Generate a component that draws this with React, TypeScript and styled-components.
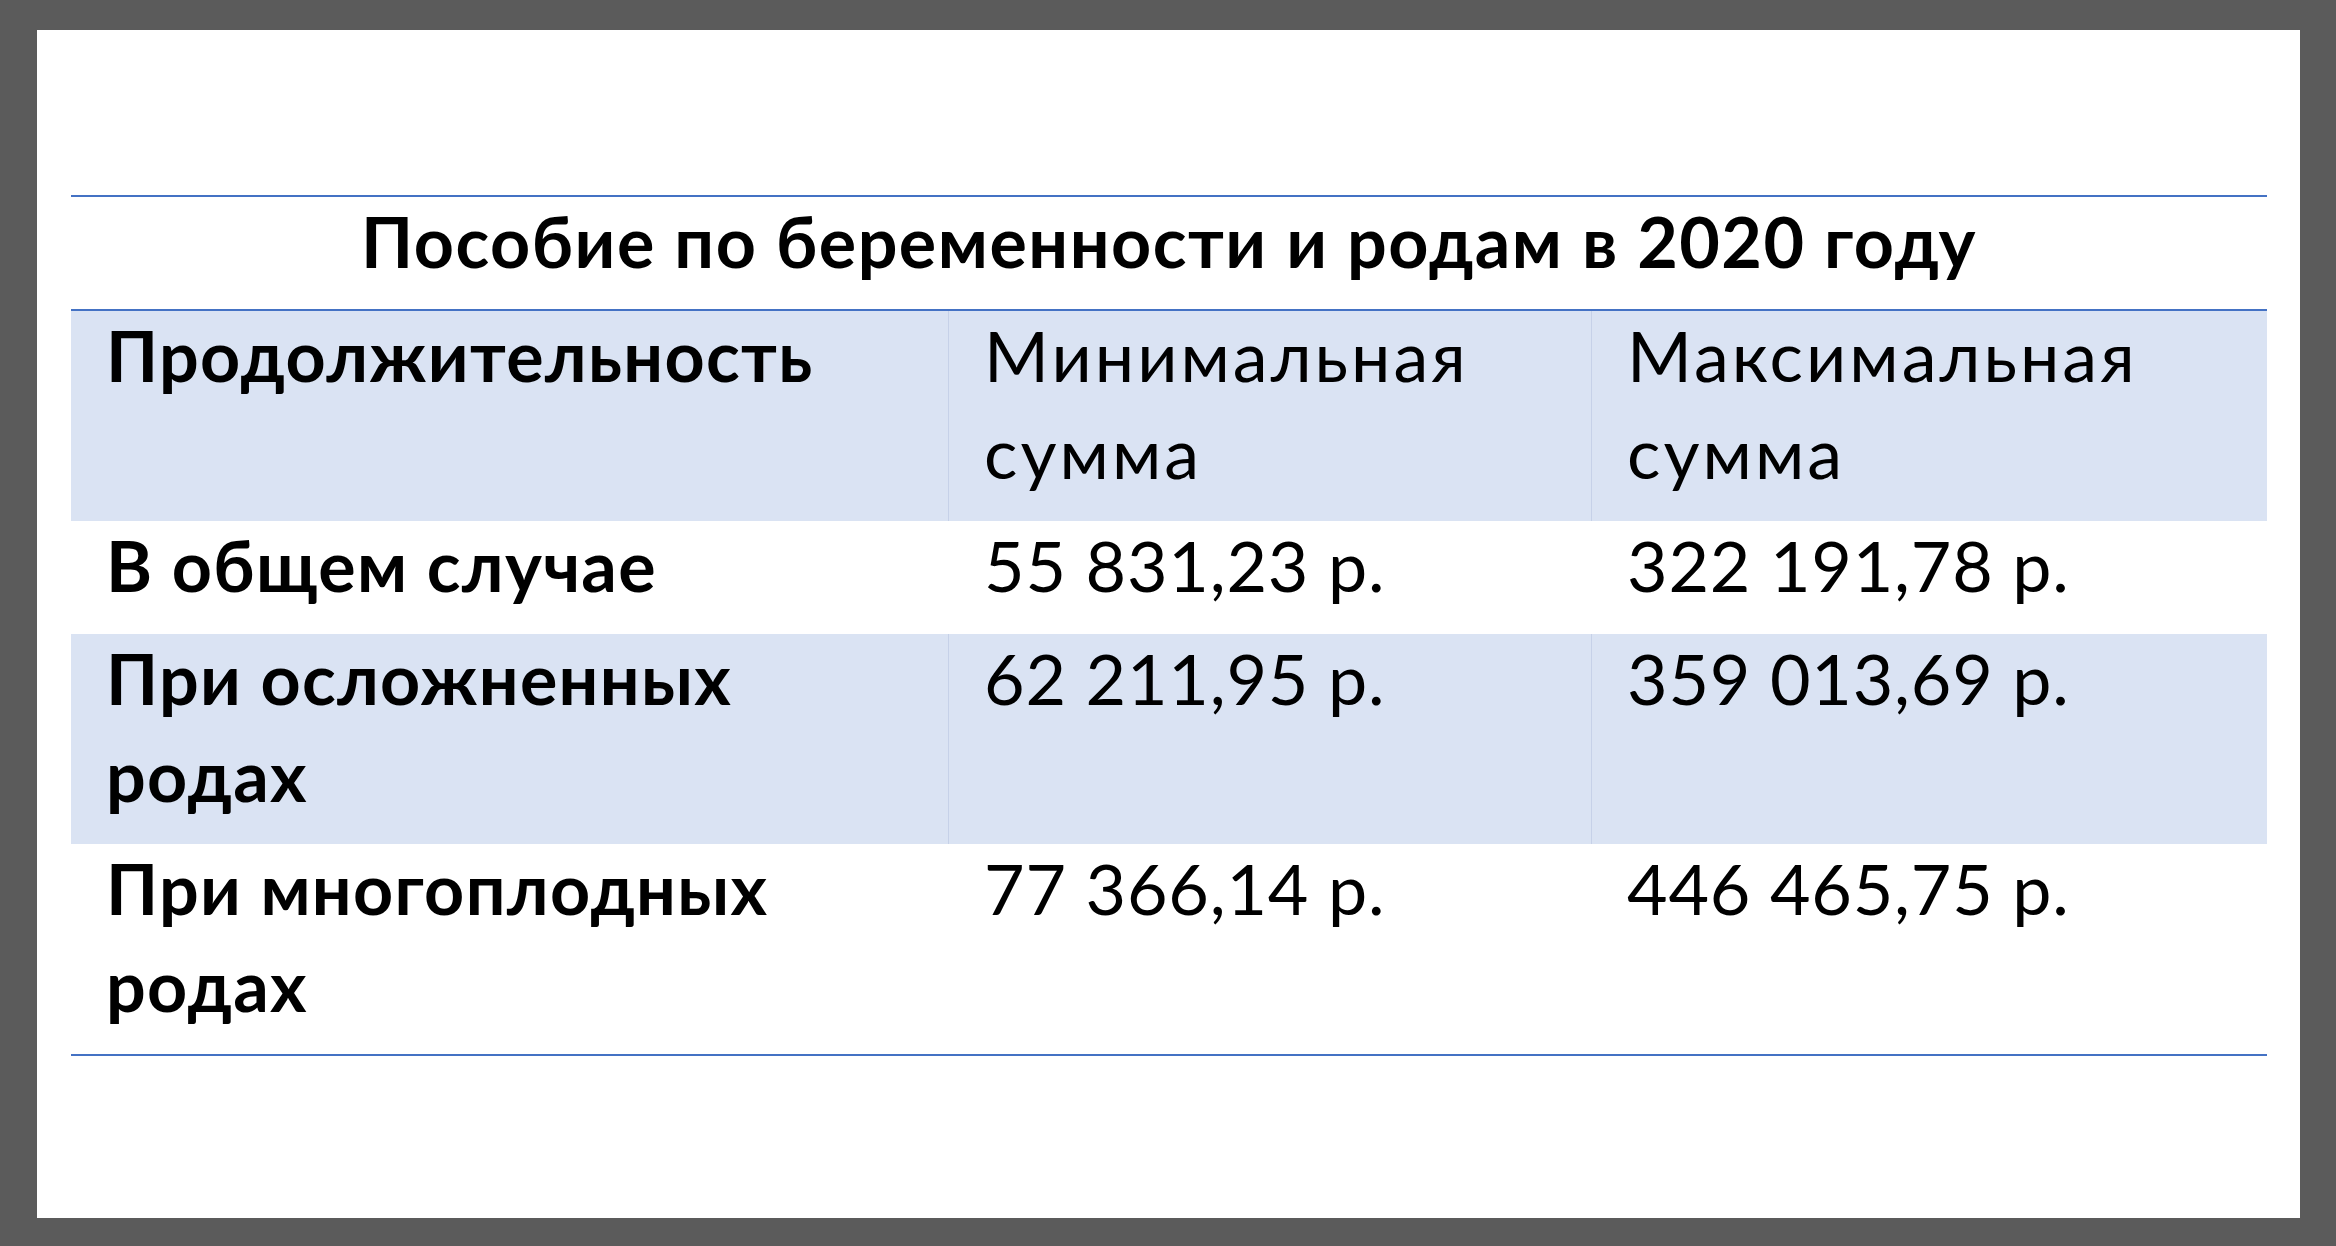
import styled, { createGlobalStyle } from 'styled-components'

const Global = createGlobalStyle`
  html, body {
    margin: 0;
    padding: 0;
    background: #5b5b5b;
  }
`

const Page = styled.div`
  width: 2336px;
  height: 1246px;
  box-sizing: border-box;
  padding: 30px 36px 28px 37px;
`

const Sheet = styled.div`
  background: #ffffff;
  height: 100%;
  box-sizing: border-box;
  padding: 165px 0 0 34px;
`

const Table = styled.table`
  width: 2196px;
  table-layout: fixed;
  border-collapse: separate;
  border-spacing: 0;
  font-family: Lato, 'Liberation Sans', sans-serif;
  font-size: 70px;
  line-height: 97px;
  color: #000;
  border-top: 2px solid #4472c4;
  border-bottom: 2px solid #4472c4;
`

const Col = styled.col<{ $w: number }>`
  width: ${p => p.$w}px;
`

const TitleCell = styled.th`
  font-weight: 700;
  text-align: center;
  letter-spacing: 1.5px;
  padding: 0 0 15px;
  border-bottom: 2px solid #4472c4;
`

const Row = styled.tr<{ $shaded?: boolean }>`
  background: ${p => (p.$shaded ? '#dae3f3' : 'transparent')};

  & > * + * {
    border-left: 1px solid ${p => (p.$shaded ? '#c6d1e8' : 'transparent')};
  }
`

const Cell = styled.td<{ $bold?: boolean; $wide?: boolean }>`
  font-weight: ${p => (p.$bold ? 700 : 400)};
  letter-spacing: ${p => (p.$bold ? 1.3 : p.$wide ? 3 : 0.8)}px;
  text-align: left;
  vertical-align: top;
  padding: 0 20px 16px 35px;
`

const CellText = styled.div`
  margin: -4px 0 4px;
`

const rows = [
  { label: 'В общем случае', min: '55 831,23 р.', max: '322 191,78 р.' },
  { label: 'При осложненных родах', min: '62 211,95 р.', max: '359 013,69 р.' },
  { label: 'При многоплодных родах', min: '77 366,14 р.', max: '446 465,75 р.' },
]

export default function App() {
  return (
    <Page>
      <Global />
      <Sheet>
        <Table>
          <colgroup>
            <Col $w={877} />
            <Col $w={643} />
            <Col $w={676} />
          </colgroup>
          <thead>
            <tr>
              <TitleCell colSpan={3}>
                <CellText>Пособие по беременности и родам в 2020 году</CellText>
              </TitleCell>
            </tr>
          </thead>
          <tbody>
            <Row $shaded>
              <Cell $bold><CellText>Продолжительность</CellText></Cell>
              <Cell $wide><CellText>Минимальная сумма</CellText></Cell>
              <Cell $wide><CellText>Максимальная сумма</CellText></Cell>
            </Row>
            {rows.map((r, i) => (
              <Row key={r.label} $shaded={i % 2 === 1}>
                <Cell $bold><CellText>{r.label}</CellText></Cell>
                <Cell><CellText>{r.min}</CellText></Cell>
                <Cell><CellText>{r.max}</CellText></Cell>
              </Row>
            ))}
          </tbody>
        </Table>
      </Sheet>
    </Page>
  )
}
